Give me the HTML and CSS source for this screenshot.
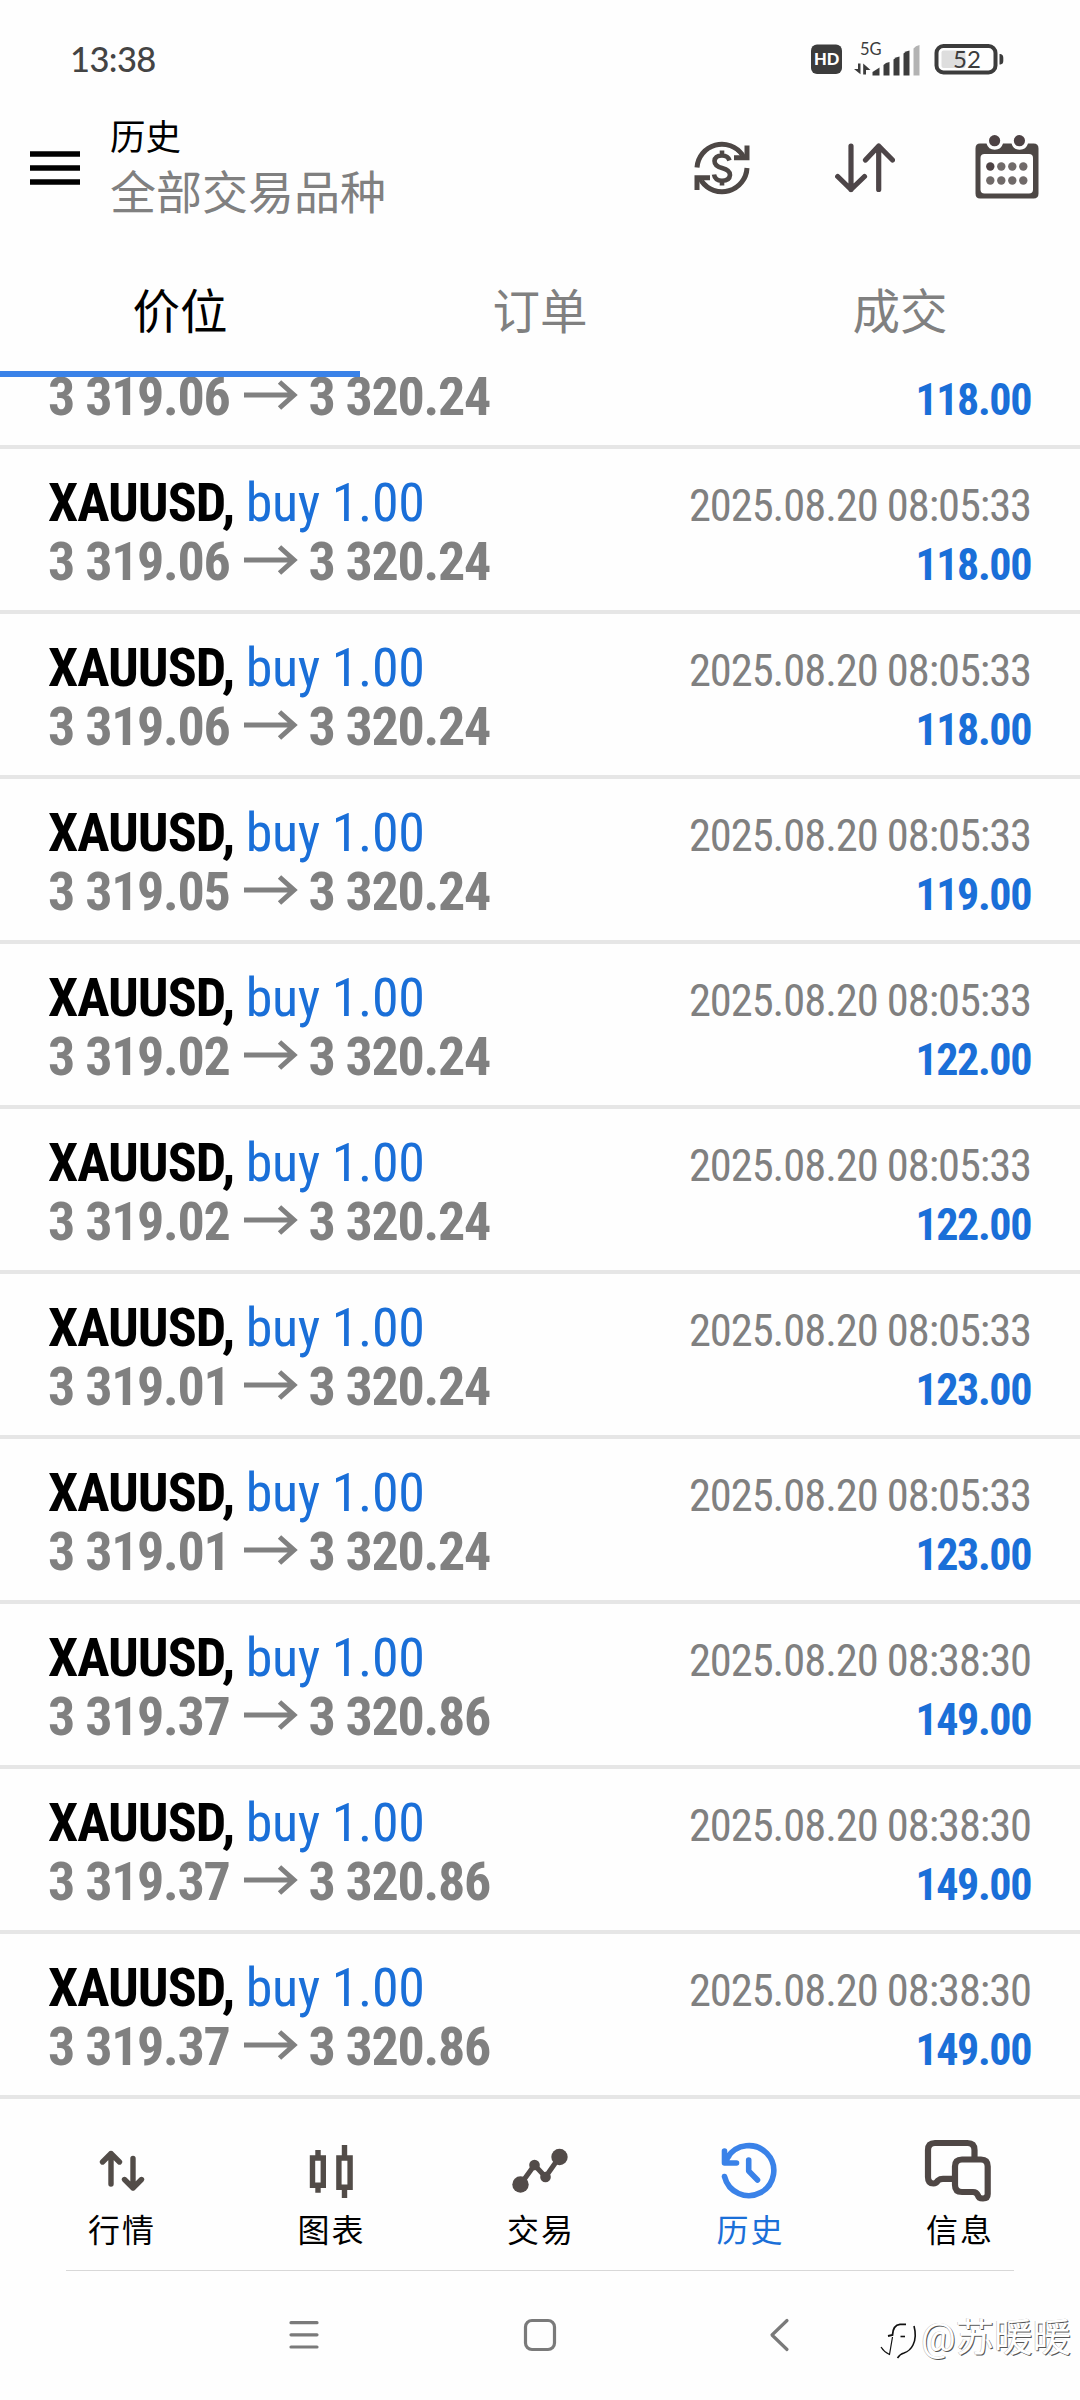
FILE: index.html
```
<!DOCTYPE html>
<html lang="zh-CN">
<head>
<meta charset="utf-8">
<title>历史</title>
<link rel="stylesheet" href="styles.css">
</head>
<body>
<svg class="defs" width="0" height="0">
  <symbol id="arrow" viewBox="0 0 54 30"><path d="M0 15H50M35.500 2L50 15L35.500 28" fill="none" stroke="#808080" stroke-width="5"/></symbol>
</svg>

<header class="status">
  <span class="clock">13:38</span>
  <svg class="status-icons" viewBox="0 0 194 34" width="194" height="34">
    <rect x="1" y="2.500" width="31" height="29.500" rx="6" fill="#3c3c3c"/>
    <text x="16.700" y="23" class="hd" text-anchor="middle">HD</text>
    <text x="50" y="12.500" class="net">5G</text>
    <path d="M50.500 21.500V32.300L44 27H48V21.500ZM53.200 32.500V21.500L60.500 28H56V32.500Z" fill="#3c3c3c"/>
    <g fill="#3c3c3c">
      <path d="M62.500 33.500V30L69.500 25.500V33.500Z"/>
      <path d="M73.500 33.500V23Q75.500 20.500 79.500 20V33.500Z"/>
      <path d="M83.500 33.500V17.500Q85.500 15 89.500 14.500V33.500Z"/>
      <path d="M93.500 33.500V11.500Q95.500 9 99.500 8.500V33.500Z"/>
    </g>
    <path d="M103.500 33.500V6.500Q105.500 3.500 109.500 3V33.500Z" fill="#b3b3b3"/>
    <rect x="126.500" y="4" width="59" height="26.500" rx="7" fill="none" stroke="#3c3c3c" stroke-width="4"/>
    <rect x="131.500" y="8.500" width="24" height="17.500" rx="2" fill="#dedede"/>
    <path d="M189.500 12H190.500Q193.300 12.500 193.300 16V19Q193.300 22 190.500 22.500H189.500Z" fill="#3c3c3c"/>
    <text x="157" y="25.700" class="pct" text-anchor="middle">52</text>
  </svg>
</header>

<div class="appbar">
  <svg class="menu" viewBox="0 0 50 34" width="50" height="34"><path d="M0 3H50M0 17H50M0 31H50" stroke="#000" stroke-width="5.600"/></svg>
  <div class="titles">
    <div class="title">历史</div>
    <div class="subtitle">全部交易品种</div>
  </div>
  <div class="actions">
    <svg class="currency" viewBox="0 0 56 56" width="56" height="56" fill="none" stroke="#4d4745" stroke-width="5">
      <path d="M3 27.500A25 25 0 0 1 48.500 15"/>
      <path d="M53 28A25 25 0 0 1 7.500 41"/>
      <path d="M53 5.500V17.800H40M3 50V37.700H16"/>
      <path d="M43 10L53 18M13 46L3 38" stroke-width="3"/>
      <path d="M35.500 20.500Q34 15.500 28 15.500Q21 15.500 20.500 21Q20.500 26 28 28Q36 30 36 35Q35.500 40.700 28 40.700Q21 40.700 20 34.500M28 10.500V16M28 40V45.500" stroke-width="4.600"/>
    </svg>
    <svg viewBox="0 0 60 50" width="60" height="50" fill="none" stroke="#4d4548" stroke-width="5.200" stroke-linecap="round" stroke-linejoin="round">
      <path d="M16 3V46.500M2.700 33.500L16 46.500L29.500 33.500M43.700 46.500V3M30.500 17L43.700 3L57.500 17"/>
    </svg>
    <svg class="calendar" viewBox="0 0 64 64" width="64" height="64">
      <path d="M5 8.500H11.500A8.600 8.600 0 0 0 28 8.500H36.500A8.600 8.600 0 0 0 53 8.500H58.500Q63.500 8.500 63.500 13.500V58.500Q63.500 63.500 58.500 63.500H5Q0.500 63.500 0.500 58.500V13.500Q0.500 8.500 5 8.500Z" fill="#4d4745"/>
      <rect x="5.500" y="19" width="52.500" height="39.500" rx="4" fill="#fff"/>
      <g fill="#4d4244"><circle cx="19.600" cy="5.700" r="5.600"/><circle cx="44.400" cy="5.700" r="5.600"/><circle cx="15.300" cy="31.500" r="4.200"/></g>
      <g fill="#706a69"><circle cx="26.300" cy="31.500" r="4.200"/><circle cx="37.300" cy="31.500" r="4.200"/><circle cx="48.300" cy="31.500" r="4.200"/><circle cx="15.300" cy="45.500" r="4.200"/><circle cx="26.300" cy="45.500" r="4.200"/><circle cx="37.300" cy="45.500" r="4.200"/><circle cx="48.300" cy="45.500" r="4.200"/></g>
    </svg>
  </div>
</div>

<nav class="tabs">
  <div class="tab active">价位</div>
  <div class="tab">订单</div>
  <div class="tab">成交</div>
</nav>

<main class="deals">
  <div class="deal partial">
    <div class="line"><span class="price">3 319.06<svg class="to"><use href="#arrow"/></svg>3 320.24</span><span class="profit">118.00</span></div>
  </div>
  <div class="deal">
    <div class="line"><span class="symbol">XAUUSD, <span class="side">buy 1.00</span></span><span class="time">2025.08.20 08:05:33</span></div>
    <div class="line"><span class="price">3 319.06<svg class="to"><use href="#arrow"/></svg>3 320.24</span><span class="profit">118.00</span></div>
  </div>
  <div class="deal">
    <div class="line"><span class="symbol">XAUUSD, <span class="side">buy 1.00</span></span><span class="time">2025.08.20 08:05:33</span></div>
    <div class="line"><span class="price">3 319.06<svg class="to"><use href="#arrow"/></svg>3 320.24</span><span class="profit">118.00</span></div>
  </div>
  <div class="deal">
    <div class="line"><span class="symbol">XAUUSD, <span class="side">buy 1.00</span></span><span class="time">2025.08.20 08:05:33</span></div>
    <div class="line"><span class="price">3 319.05<svg class="to"><use href="#arrow"/></svg>3 320.24</span><span class="profit">119.00</span></div>
  </div>
  <div class="deal">
    <div class="line"><span class="symbol">XAUUSD, <span class="side">buy 1.00</span></span><span class="time">2025.08.20 08:05:33</span></div>
    <div class="line"><span class="price">3 319.02<svg class="to"><use href="#arrow"/></svg>3 320.24</span><span class="profit">122.00</span></div>
  </div>
  <div class="deal">
    <div class="line"><span class="symbol">XAUUSD, <span class="side">buy 1.00</span></span><span class="time">2025.08.20 08:05:33</span></div>
    <div class="line"><span class="price">3 319.02<svg class="to"><use href="#arrow"/></svg>3 320.24</span><span class="profit">122.00</span></div>
  </div>
  <div class="deal">
    <div class="line"><span class="symbol">XAUUSD, <span class="side">buy 1.00</span></span><span class="time">2025.08.20 08:05:33</span></div>
    <div class="line"><span class="price">3 319.01<svg class="to"><use href="#arrow"/></svg>3 320.24</span><span class="profit">123.00</span></div>
  </div>
  <div class="deal">
    <div class="line"><span class="symbol">XAUUSD, <span class="side">buy 1.00</span></span><span class="time">2025.08.20 08:05:33</span></div>
    <div class="line"><span class="price">3 319.01<svg class="to"><use href="#arrow"/></svg>3 320.24</span><span class="profit">123.00</span></div>
  </div>
  <div class="deal">
    <div class="line"><span class="symbol">XAUUSD, <span class="side">buy 1.00</span></span><span class="time">2025.08.20 08:38:30</span></div>
    <div class="line"><span class="price">3 319.37<svg class="to"><use href="#arrow"/></svg>3 320.86</span><span class="profit">149.00</span></div>
  </div>
  <div class="deal">
    <div class="line"><span class="symbol">XAUUSD, <span class="side">buy 1.00</span></span><span class="time">2025.08.20 08:38:30</span></div>
    <div class="line"><span class="price">3 319.37<svg class="to"><use href="#arrow"/></svg>3 320.86</span><span class="profit">149.00</span></div>
  </div>
  <div class="deal">
    <div class="line"><span class="symbol">XAUUSD, <span class="side">buy 1.00</span></span><span class="time">2025.08.20 08:38:30</span></div>
    <div class="line"><span class="price">3 319.37<svg class="to"><use href="#arrow"/></svg>3 320.86</span><span class="profit">149.00</span></div>
  </div>
</main>

<nav class="bottom">
  <div class="item">
    <svg viewBox="0 0 80 70" width="80" height="70" fill="none" stroke="#524c48" stroke-width="5.400" stroke-linecap="round" stroke-linejoin="round"><path d="M30 49V18.500M21.500 27L30 18.500L38.500 27M52 23.500V53M43.500 44.500L52 53L60.500 44.500"/></svg>
    <span>行情</span>
  </div>
  <div class="item">
    <svg viewBox="0 0 80 70" width="80" height="70" fill="none" stroke="#524c48" stroke-width="5.400"><path d="M21.500 23V50.300H32.300V23ZM47.900 23V52.300H59.100V23ZM27 15V23M27 50V57.700M53.500 10V23M53.500 52V63"/></svg>
    <span>图表</span>
  </div>
  <div class="item">
    <svg viewBox="0 0 80 70" width="80" height="70"><path d="M20.500 49.500L34.500 30L45.500 42L59.500 22" fill="none" stroke="#524b49" stroke-width="5"/><g fill="#524b49"><circle cx="20.500" cy="49.500" r="8.200"/><circle cx="34.500" cy="30" r="5.300"/><circle cx="45.500" cy="42" r="5.300"/><circle cx="59.500" cy="22" r="8.200"/></g></svg>
    <span>交易</span>
  </div>
  <div class="item on">
    <svg viewBox="1 0 80 70" width="80" height="70" fill="none" stroke="#3a82e8" stroke-width="5.600" stroke-linecap="round" stroke-linejoin="round"><path d="M15.500 41.500A25 25 0 1 0 18.500 22.500M15.500 16V28H27.500M16.500 26L20 21M39.700 25V36L48.500 45"/></svg>
    <span>历史</span>
  </div>
  <div class="item">
    <svg viewBox="1 0 80 70" width="80" height="70" fill="none" stroke="#4f4745" stroke-width="6.200" stroke-linejoin="round"><path d="M56.500 22V15Q56.500 8 49.500 8H17Q10 8 10 15V42Q10 48.500 15.500 48.500Q18 48.500 20 45.500Q22 43.800 25 43.800H37"/><path d="M44 24.500H63Q69.700 24.500 69.700 31.500V59Q69.700 63.500 65 63.500Q60.500 63.500 60 60.500Q58.500 57 55 57H44Q37 57 37 50V31.500Q37 24.500 44 24.500Z"/></svg>
    <span>信息</span>
  </div>
</nav>

<footer class="system">
  <svg viewBox="0 0 30 34" width="30" height="34"><path d="M2 4.700H28M2 16.800H28M2 29H28" stroke="#7a7a7a" stroke-width="3.200" stroke-linecap="round"/></svg>
  <svg class="home" viewBox="0 0 34 34" width="34" height="34"><rect x="2.500" y="2.500" width="29" height="29" rx="6.500" fill="none" stroke="#7a7a7a" stroke-width="3.200"/></svg>
  <svg viewBox="0 0 22 34" width="22" height="34"><path d="M19 2.500L4 17L19 31.500" fill="none" stroke="#7a7a7a" stroke-width="3.200" stroke-linecap="round" stroke-linejoin="round"/></svg>
</footer>

<div class="watermark">
  <svg viewBox="0 0 38 44" width="38" height="44" fill="none" stroke="#111"><path d="M8 19L12.500 18Q13 8 20 7.300H26" stroke-width="1.800"/><path d="M34 9Q37 20 33 28Q30 34 24 36Q20 37 17.500 41" stroke-width="1.600"/><path d="M1 30Q4 35 9.500 37.500L12.500 20" stroke-width="1.200"/><path d="M20.500 19.500H25" stroke-width="1.600"/></svg>
  <span>@苏暖暖</span>
</div>
</body>
</html>
```
FILE: styles.css
```
* { box-sizing: border-box; }
body {
  margin: 0;
  width: 1080px;
  height: 2400px;
  overflow: hidden;
  position: relative;
  display: flex;
  flex-direction: column;
  background: #fefefe;
  color: #000;
  font-family: Roboto, "Noto Sans CJK SC", sans-serif;
}
svg { display: block; flex: none; }
.defs { position: absolute; }

.status {
  height: 120px;
  padding: 0 76px 0 70px;
  display: flex;
  justify-content: space-between;
  align-items: center;
}
.clock {
  margin-top: -2px;
  font: 500 34.500px/40px Lato, sans-serif;
  letter-spacing: -0.600px;
  color: #444;
}
.status-icons { margin-top: -3px; overflow: visible; }
.hd { font: 900 16.500px Lato, sans-serif; fill: #fff; }
.net { font: 400 16.500px Lato, sans-serif; fill: #3c3c3c; }
.pct { font: 400 24px Lato, sans-serif; fill: #3c3c3c; }

.appbar {
  height: 120px;
  padding: 0 41px 0 30px;
  display: flex;
  align-items: flex-start;
}
.menu { margin-top: 31px; }
.titles { margin-left: 30px; }
.title { font-size: 35.500px; line-height: 36px; }
.subtitle { margin-top: 14px; font-size: 46px; line-height: 46px; color: #808080; }
.actions {
  flex: 1;
  height: 96px;
  display: flex;
  justify-content: flex-end;
  align-items: center;
  gap: 80px;
}
.currency { margin-right: 5px; }
.calendar { margin-top: -2px; }

.tabs { height: 137px; display: flex; }
.tab {
  flex: 1;
  height: 137px;
  border-bottom: 6px solid transparent;
  font-size: 47.500px;
  line-height: 147px;
  text-align: center;
  color: #808080;
}
.tab.active { color: #000; border-bottom-color: #3a82e8; }

.deals {
  height: 1722px;
  overflow: hidden;
  font-family: "Roboto Condensed", Roboto, sans-serif;
  font-stretch: 75%;
}
.deal {
  height: 165px;
  padding: 24px 49px 0 48px;
  border-bottom: 4px solid #e6e6e6;
}
.deal.partial {
  height: 72px;
  display: flex;
  flex-direction: column;
  justify-content: flex-end;
  padding-top: 0;
  padding-bottom: 19px;
}
.line {
  height: 59px;
  line-height: 59px;
  flex: none;
  display: flex;
  justify-content: space-between;
  align-items: baseline;
  white-space: pre;
}
.symbol, .price { font-size: 54px; font-weight: 700; letter-spacing: -1px; }
.side { font-weight: 400; color: #1a6fd8; letter-spacing: -0.400px; }
.price { color: #808080; letter-spacing: -1.300px; }
.to { display: inline-block; width: 54px; height: 30px; margin: 0 10px 0 15px; vertical-align: 5px; }
.time { font-size: 44.500px; color: #808080; letter-spacing: -1.050px; }
.profit { font-size: 44px; font-weight: 700; color: #1a6fd8; letter-spacing: -1.400px; }

.bottom {
  height: 172px;
  margin: 0 66px;
  border-bottom: 1px solid #d8d8d8;
  display: flex;
  justify-content: space-between;
}
.item {
  flex: none;
  width: 110px;
  padding-top: 36px;
  display: flex;
  flex-direction: column;
  align-items: center;
  font-size: 32px;
  line-height: 40px;
  letter-spacing: 2px;
}
.item span { margin-top: 6px; padding-left: 2px; }
.item.on { color: #1a6fd8; }

.system {
  height: 129px;
  padding: 47px 290px 0 289px;
  display: flex;
  justify-content: space-between;
}
.home { margin-right: 8px; }

.watermark {
  position: absolute;
  left: 880px;
  top: 2317px;
  display: flex;
  gap: 3px;
  font-size: 38.500px;
  line-height: 42px;
  color: #fff;
}
.watermark span { text-shadow: 1px 1px 0 #555, -0.500px -0.500px 0 #bbb; }
```
